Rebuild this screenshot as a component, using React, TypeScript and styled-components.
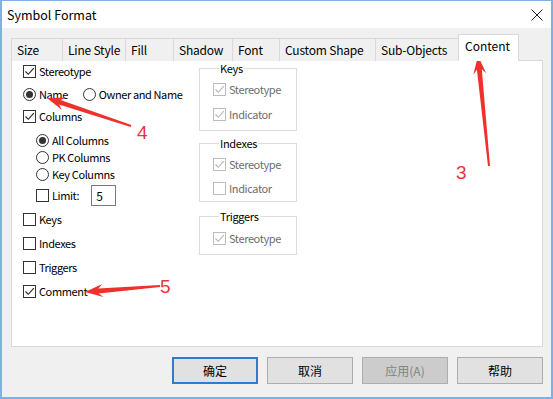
import React from "react";
import styled, { createGlobalStyle } from "styled-components";

const GlobalStyle = createGlobalStyle`
    html, body {
        margin: 0;
        padding: 0;
        background: #ffffff;
    }
    body {
        font-family: "Noto Sans CJK SC", "Noto Sans", sans-serif;
        font-size: 12px;
        color: #000;
    }
`;

type Pt = [number, number];

// tapered red arrow, drawn as one polygon
const arrowPoints = (tip: Pt, tail: Pt, headLen: number, headW: number, neckW: number, tailW: number) => {
    const dx = tip[0] - tail[0];
    const dy = tip[1] - tail[1];
    const len = Math.hypot(dx, dy);
    const ux = dx / len;
    const uy = dy / len;
    const nx = -uy;
    const ny = ux;
    const base: Pt = [tip[0] - ux * headLen, tip[1] - uy * headLen];
    const neck: Pt = [tip[0] - ux * headLen * 0.75, tip[1] - uy * headLen * 0.75];
    const pts: Pt[] = [
        tip,
        [base[0] + (nx * headW) / 2, base[1] + (ny * headW) / 2],
        [neck[0] + (nx * neckW) / 2, neck[1] + (ny * neckW) / 2],
        [tail[0] + (nx * tailW) / 2, tail[1] + (ny * tailW) / 2],
        [tail[0] - (nx * tailW) / 2, tail[1] - (ny * tailW) / 2],
        [neck[0] - (nx * neckW) / 2, neck[1] - (ny * neckW) / 2],
        [base[0] - (nx * headW) / 2, base[1] - (ny * headW) / 2],
    ];
    return pts.map((p) => `${p[0].toFixed(1)},${p[1].toFixed(1)}`).join(" ");
};

const tabs = [
    { label: "Size", width: 51 },
    { label: "Line Style", width: 63 },
    { label: "Fill", width: 48 },
    { label: "Shadow", width: 59 },
    { label: "Font", width: 47 },
    { label: "Custom Shape", width: 96 },
    { label: "Sub-Objects", width: 83 },
];

const CheckMark = ({ color }: { color: string }) => (
    <svg width="11" height="11" viewBox="0 0 11 11">
        <path d="M1.5 5.5 L4.3 8.3 L9.8 2.2" fill="none" stroke={color} strokeWidth="1.1" />
    </svg>
);

const CheckBox = ({ checked, disabled }: { checked?: boolean; disabled?: boolean }) => (
    <Box $disabled={disabled}>{checked && <CheckMark color={disabled ? "#b5b5b5" : "#222"} />}</Box>
);

const Radio = ({ checked }: { checked?: boolean }) => <RadioCircle>{checked && <RadioDot />}</RadioCircle>;

const App = () => {
    return (
        <>
            <GlobalStyle />
            <Window>
                <TitleBar>
                    <Title>Symbol Format</Title>
                    <CloseButton>
                        <svg width="12" height="12" viewBox="0 0 12 12">
                            <path d="M0.5 0.5 L11.5 11.5 M11.5 0.5 L0.5 11.5" stroke="#222" strokeWidth="1" />
                        </svg>
                    </CloseButton>
                </TitleBar>
                <Body>
                    <TabStrip>
                        {tabs.map((t) => (
                            <Tab key={t.label} $width={t.width}>
                                {t.label}
                            </Tab>
                        ))}
                        <ActiveTab>Content</ActiveTab>
                    </TabStrip>
                    <Panel>
                        <LeftCol>
                            <Row $top={2}>
                                <CheckBox checked />
                                <Label>Stereotype</Label>
                            </Row>
                            <Row $top={7}>
                                <Radio checked />
                                <Label>Name</Label>
                                <Spacer />
                                <Radio />
                                <Label>Owner and Name</Label>
                            </Row>
                            <Row $top={6}>
                                <CheckBox checked />
                                <Label>Columns</Label>
                            </Row>
                            <SubGroup>
                                <Row $top={8}>
                                    <Radio checked />
                                    <Label>All Columns</Label>
                                </Row>
                                <Row $top={1}>
                                    <Radio />
                                    <Label>PK Columns</Label>
                                </Row>
                                <Row $top={1}>
                                    <Radio />
                                    <Label>Key Columns</Label>
                                </Row>
                                <LimitRow>
                                    <CheckBox />
                                    <Label>Limit:</Label>
                                    <NumberField>5</NumberField>
                                </LimitRow>
                            </SubGroup>
                            <Row $top={5}>
                                <CheckBox />
                                <Label>Keys</Label>
                            </Row>
                            <Row $top={8}>
                                <CheckBox />
                                <Label>Indexes</Label>
                            </Row>
                            <Row $top={8}>
                                <CheckBox />
                                <Label>Triggers</Label>
                            </Row>
                            <Row $top={8}>
                                <CheckBox checked />
                                <Label>Comment</Label>
                            </Row>
                        </LeftCol>
                        <RightCol>
                            <Group $top={0} $bottom={8}>
                                <Legend>Keys</Legend>
                                <Row $top={1}>
                                    <CheckBox checked disabled />
                                    <DimLabel>Stereotype</DimLabel>
                                </Row>
                                <Row $top={9}>
                                    <CheckBox checked disabled />
                                    <DimLabel>Indicator</DimLabel>
                                </Row>
                            </Group>
                            <Group $top={5} $bottom={5}>
                                <Legend>Indexes</Legend>
                                <Row $top={1}>
                                    <CheckBox checked disabled />
                                    <DimLabel>Stereotype</DimLabel>
                                </Row>
                                <Row $top={8}>
                                    <CheckBox disabled />
                                    <DimLabel>Indicator</DimLabel>
                                </Row>
                            </Group>
                            <Group $top={7} $bottom={8}>
                                <Legend>Triggers</Legend>
                                <Row $top={2}>
                                    <CheckBox checked disabled />
                                    <DimLabel>Stereotype</DimLabel>
                                </Row>
                            </Group>
                        </RightCol>
                    </Panel>
                    <Footer>
                        <Button $focused>确定</Button>
                        <Button>取消</Button>
                        <Button $disabled>应用(A)</Button>
                        <Button>帮助</Button>
                    </Footer>
                </Body>
                <Annotations width="553" height="399" viewBox="0 0 553 399">
                    <polygon points={arrowPoints([478, 56], [489, 166], 18, 13, 5, 2)} fill="#f0302c" />
                    <polygon points={arrowPoints([47, 98], [131, 126], 18, 13, 5, 2)} fill="#f0302c" />
                    <polygon points={arrowPoints([85, 292], [160, 286], 18, 13, 5, 2)} fill="#f0302c" />
                    <AnnoText x="456" y="179">3</AnnoText>
                    <AnnoText x="137" y="139">4</AnnoText>
                    <AnnoText x="160" y="293">5</AnnoText>
                </Annotations>
            </Window>
        </>
    );
};

const Window = styled.div`
    position: relative;
    width: 553px;
    height: 399px;
    box-sizing: border-box;
    border: 2px solid #7fb0e0;
    border-top: 1px solid #7fb0e0;
    background: #f0f0f0;
    display: flex;
    flex-direction: column;
    overflow: hidden;
`;

const TitleBar = styled.div`
    height: 27px;
    flex: none;
    background: #ffffff;
    display: flex;
    align-items: center;
    padding: 0 7px 0 5px;
`;

const Title = styled.div`
    flex: 1;
    font-size: 12.5px;
    color: #000;
`;

const CloseButton = styled.div`
    width: 14px;
    height: 14px;
    display: flex;
    align-items: center;
    justify-content: center;
`;

const Body = styled.div`
    flex: 1;
    display: flex;
    flex-direction: column;
    padding: 7px 8px 0 9px;
`;

const TabStrip = styled.div`
    display: flex;
    align-items: flex-end;
    height: 26px;
    position: relative;
    z-index: 1;
    margin-bottom: -1px;
`;

const Tab = styled.div<{ $width: number }>`
    width: ${(p) => p.$width + 1}px;
    height: 23px;
    box-sizing: border-box;
    margin-right: -1px;
    border: 1px solid #d9d9d9;
    border-bottom: none;
    background: #f0f0f0;
    font-size: 12px;
    letter-spacing: -0.2px;
    line-height: 22px;
    padding-left: 5px;
    white-space: nowrap;
`;

const ActiveTab = styled.div`
    width: 61px;
    height: 27px;
    box-sizing: border-box;
    border: 1px solid #d9d9d9;
    border-bottom: none;
    background: #ffffff;
    font-size: 12px;
    line-height: 22px;
    padding-left: 6px;
`;

const Panel = styled.div`
    height: 287px;
    box-sizing: border-box;
    border: 1px solid #d9d9d9;
    background: #ffffff;
    display: grid;
    grid-template-columns: 187px 98px;
    align-items: start;
`;

const LeftCol = styled.div`
    display: flex;
    flex-direction: column;
    padding-left: 11px;
`;

const SubGroup = styled.div`
    display: flex;
    flex-direction: column;
    padding-left: 13px;
`;

const Row = styled.div<{ $top: number }>`
    display: flex;
    align-items: center;
    height: 16px;
    margin-top: ${(p) => p.$top}px;
`;

const LimitRow = styled(Row).attrs({ $top: 2 })`
    height: 22px;
`;

const Spacer = styled.div`
    width: 15px;
`;

const Label = styled.span`
    margin-left: 3px;
    font-size: 11px;
    letter-spacing: -0.4px;
    line-height: 16px;
    white-space: nowrap;
`;

const DimLabel = styled(Label)`
    color: #6d6d6d;
`;

const Box = styled.span<{ $disabled?: boolean }>`
    width: 13px;
    height: 13px;
    box-sizing: border-box;
    border: 1px solid ${(p) => (p.$disabled ? "#bcbcbc" : "#333333")};
    background: #ffffff;
    display: flex;
    align-items: center;
    justify-content: center;
    flex: none;
`;

const RadioCircle = styled.span`
    width: 13px;
    height: 13px;
    box-sizing: border-box;
    border: 1px solid #333333;
    border-radius: 50%;
    background: #ffffff;
    display: flex;
    align-items: center;
    justify-content: center;
    flex: none;
`;

const RadioDot = styled.span`
    width: 7px;
    height: 7px;
    border-radius: 50%;
    background: #333333;
`;

const NumberField = styled.span`
    width: 25px;
    height: 21px;
    box-sizing: border-box;
    border: 1px solid #7a7a7a;
    margin-left: 12px;
    padding-left: 4px;
    font-size: 12px;
    line-height: 19px;
`;

const RightCol = styled.div`
    display: flex;
    flex-direction: column;
`;

const Group = styled.fieldset<{ $top: number; $bottom: number }>`
    margin: ${(p) => p.$top}px 0 0 0;
    padding: 5px 0 ${(p) => p.$bottom}px 13px;
    border: 1px solid #dcdcdc;
    min-width: 0;
`;

const Legend = styled.legend`
    padding: 0 1px;
    margin-left: 6px;
    font-size: 11px;
    letter-spacing: -0.3px;
    line-height: 14px;
`;

const Footer = styled.div`
    display: flex;
    justify-content: flex-end;
    gap: 9px;
    padding: 10px 0 0 0;
`;

const Button = styled.div<{ $focused?: boolean; $disabled?: boolean }>`
    width: 86px;
    height: 27px;
    box-sizing: border-box;
    border: ${(p) => (p.$focused ? "2px solid #2f7bd0" : "1px solid #adadad")};
    background: ${(p) => (p.$disabled ? "#cccccc" : "#e1e1e1")};
    color: ${(p) => (p.$disabled ? "#838383" : "#000")};
    display: flex;
    align-items: center;
    justify-content: center;
    font-size: 12px;
`;

const Annotations = styled.svg`
    position: absolute;
    left: -2px;
    top: -1px;
    pointer-events: none;
`;

const AnnoText = styled.text`
    font-family: "Liberation Sans", sans-serif;
    font-size: 19px;
    fill: #e8343a;
`;

export default App;
